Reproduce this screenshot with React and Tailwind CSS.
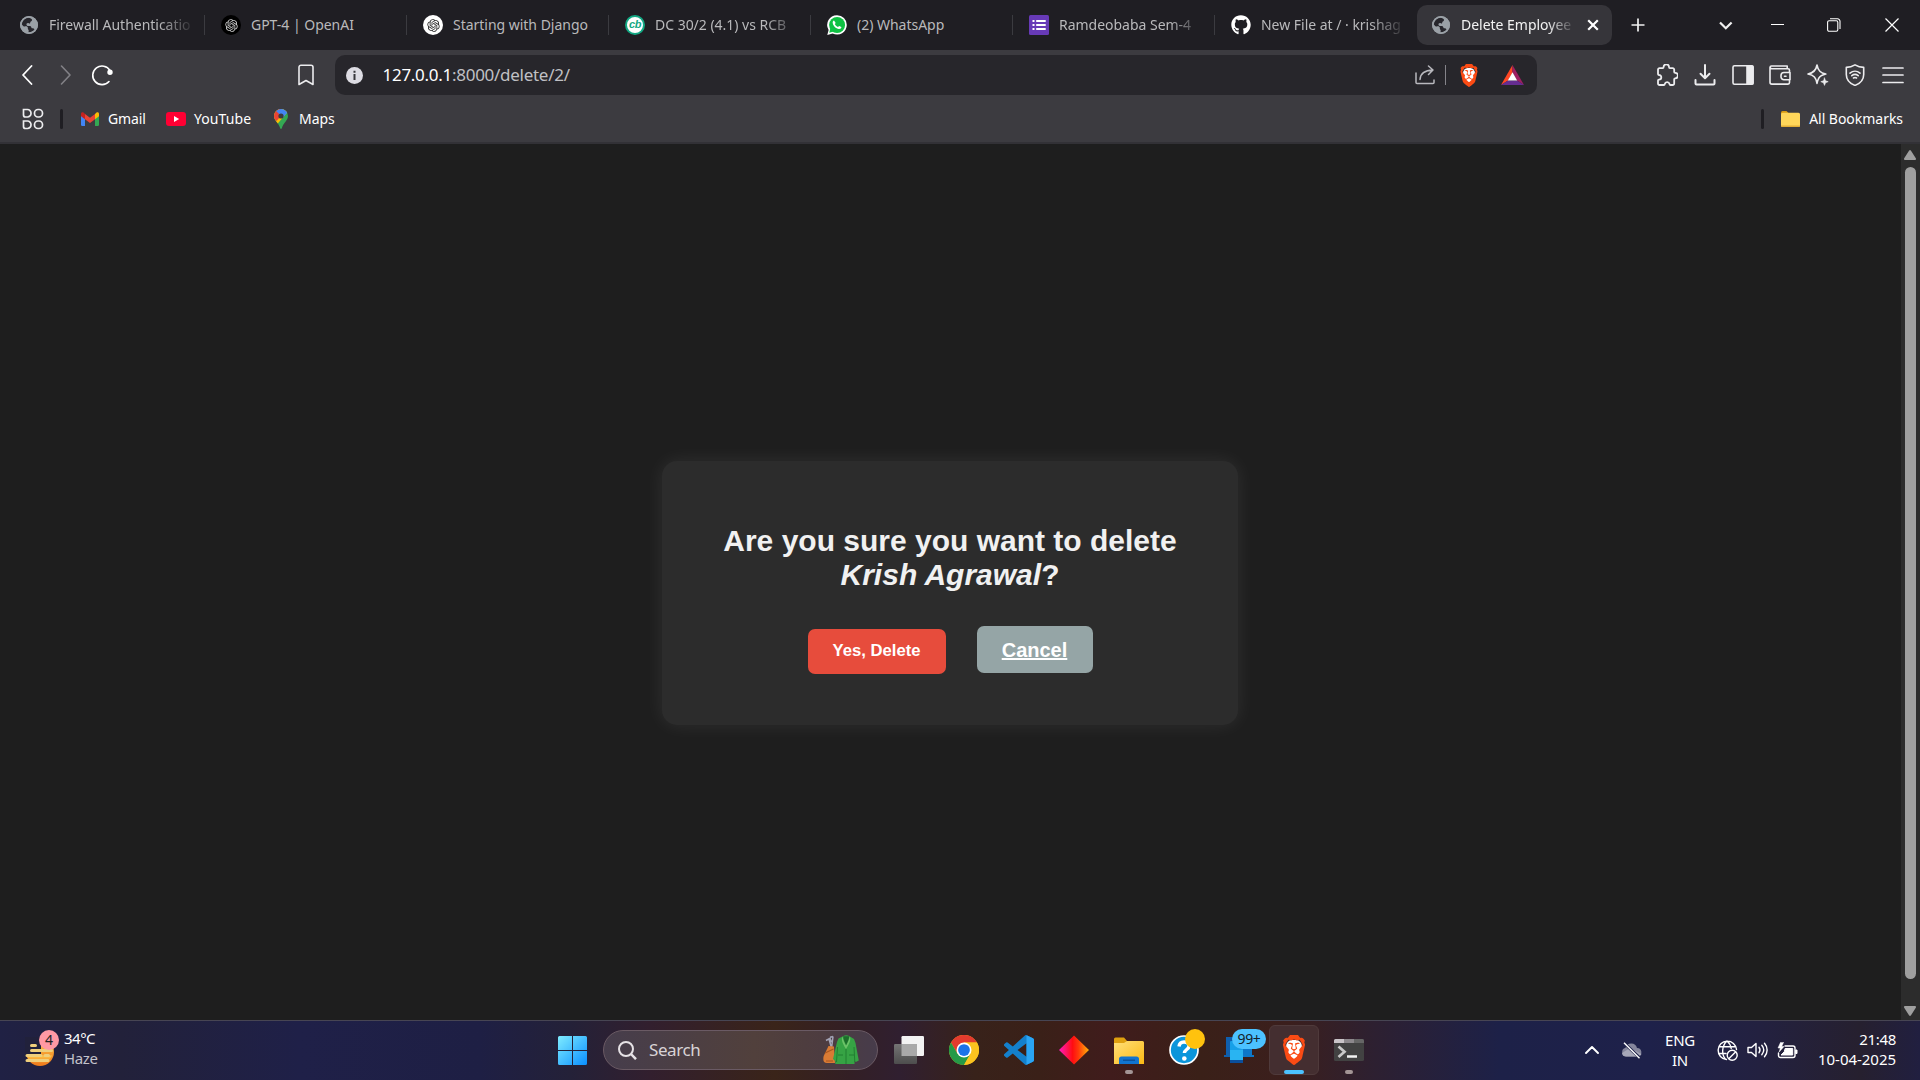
import React from "react";
import { SiBrave } from "react-icons/si";
import { RiOpenaiFill } from "react-icons/ri";
import { FaGithub } from "react-icons/fa";

const UI = "font-['Noto_Sans','Open_Sans',sans-serif]";

function GlobeFavicon() {
  return (
    <svg viewBox="0 0 18 18" className="size-[18px]">
      <circle cx="9" cy="9" r="9" fill="#9aa0a6" />
      <path d="M8.3 1.5C4.6 2 2 4.7 1.6 8.2l1.6 1.7c.8.8 1.8.5 2.4.4 1.200-.2 2 .4 2.200 1.300.2.800-.2 1.400.4 1.900.8.600.5 1.500.2 2.900 2.600.1 4.800-1.100 6.200-2.900-.5-.900-1.300-1.100-2.200-1.200-.9-.1-1-.9-1.400-1.600-.5-.8-1.500-.7-2.600-.7-.9 0-1.700-.4-1.900-1.300-.2-.9.500-1.600 1.400-1.700.9 0 1.200.9 2 .5.6-.4.1-1.300.9-1.900.8-.5 1.400-.9 1.200-1.800-.2-.8-1-1.300-1.700-1.600z" fill="#27262c" />
      <circle cx="9" cy="9" r="8.100" fill="none" stroke="#9aa0a6" strokeWidth="1.7" />
    </svg>
  );
}

function OpenAiFavicon({ dark }) {
  return (
    <span className={dark ? "flex size-5 items-center justify-center rounded-full bg-black text-[#d4d4d4]" : "flex size-5 items-center justify-center rounded-full bg-white text-[#222]"}>
      <RiOpenaiFill className="size-[15px]" />
    </span>
  );
}

function CbFavicon() {
  return (
    <span className="flex size-5 items-center justify-center rounded-full border-2 border-[#12a883] bg-white pb-px font-['Liberation_Sans',sans-serif] text-[11px] font-bold italic leading-none tracking-[-0.5px] text-[#12a883]">
      cb
    </span>
  );
}

function WhatsAppFavicon() {
  return (
    <svg viewBox="0 0 20 20" className="size-5">
      <path d="M10 .2A9.700 9.700 0 0 1 19.800 10 9.700 9.700 0 0 1 5.600 18.500L.3 19.900l1.300-5A9.700 9.700 0 0 1 10 .2z" fill="#fff" />
      <circle cx="10.100" cy="10" r="8" fill="#0fc143" />
      <path d="M2.300 17.800l1-4.500 3.400 3.300z" fill="#0fc143" />
      <path d="M7 5.400c-.7.200-1.500 1-1.300 2.400.4 3.100 3.200 5.900 6.200 6.300 1.600.1 2.500-.9 2.500-2l-2.300-1.200-1.100 1.200c-1.400-.5-2.600-1.700-3.200-3l.9-1.100z" fill="#fff" />
    </svg>
  );
}

function FormsFavicon() {
  return (
    <svg viewBox="0 0 20 20" className="size-5">
      <rect width="20" height="20" rx="1.500" fill="#673ab7" />
      <path d="M3.500 5h2v2h-2zM3.500 9h2v2h-2zM3.500 13h2v2h-2zM7.200 5h9.500v2H7.200zM7.200 9h9.500v2H7.200zM7.200 13h9.500v2H7.200z" fill="#fff" />
    </svg>
  );
}

const TABS = [
  { title: "Firewall Authenticatio", icon: <GlobeFavicon />, fade: true },
  { title: "GPT-4 | OpenAI", icon: <OpenAiFavicon dark /> },
  { title: "Starting with Django", icon: <OpenAiFavicon /> },
  { title: "DC 30/2 (4.1) vs RCB", icon: <CbFavicon />, fade: true },
  { title: "(2) WhatsApp", icon: <WhatsAppFavicon /> },
  { title: "Ramdeobaba Sem-4", icon: <FormsFavicon />, fade: true },
  { title: "New File at / · krishag", icon: <FaGithub className="size-5 text-white" />, fade: true },
];

const FADE = "[mask-image:linear-gradient(to_right,#000_110px,transparent_146px)]";

function Tab({ title, icon, last, fade }) {
  return (
    <div className="flex h-10 w-[202px] shrink-0 items-center">
      <span className="flex w-5 shrink-0 justify-center">{icon}</span>
      <span className={`ml-[10px] w-[146px] whitespace-nowrap text-[14px] leading-5 tracking-[-0.020px] text-[#b9b9bb] ${fade ? FADE : ""}`}>{title}</span>
      {!last && <span className="ml-[9px] h-5 w-px bg-[#3b3b40]" />}
    </div>
  );
}

function TabStrip() {
  return (
    <div className="flex h-[50px] items-center bg-[#1f1e23] pl-[19px]">
      {TABS.map((t, i) => (
        <Tab key={t.title} {...t} last={i === TABS.length - 1} />
      ))}
      <div className="-ml-4 flex h-10 w-[195px] shrink-0 items-center rounded-[10px] bg-[#36353a] pl-[15px]">
        <GlobeFavicon />
        <span className="ml-[11px] w-[111px] whitespace-nowrap text-[14px] leading-5 tracking-[-0.020px] text-[#f2f2f2] [mask-image:linear-gradient(to_right,#000_86px,transparent_115px)]">Delete Employee</span>
        <svg viewBox="0 0 12 12" className="ml-[15px] size-3" stroke="#fff" strokeWidth="2.200" fill="none"><path d="M1.200 1.200l9.600 9.600M10.800 1.200l-9.600 9.600" /></svg>
      </div>
      <svg viewBox="0 0 14 14" className="ml-[19px] size-[14px] shrink-0" stroke="#f0f0f0" strokeWidth="1.700" fill="none"><path d="M7 .5v13M.5 7h13" /></svg>
      <svg viewBox="0 0 14 14" className="ml-[74px] size-[14px] shrink-0" stroke="#f0f0f0" strokeWidth="2.200" fill="none"><path d="M1 4.500l5.800 5.800 5.800-5.800" /></svg>
      <svg viewBox="0 0 14 14" className="ml-[38px] size-[14px] shrink-0" stroke="#fff" strokeWidth="1" fill="none"><path d="M0 6.500h13" /></svg>
      <svg viewBox="0 0 14 14" className="ml-[42px] size-[14px] shrink-0" stroke="#fff" strokeWidth="1.100" fill="none"><rect x=".6" y="2.800" width="10.200" height="10.400" rx="1.500" /><path d="M3 .8h7.500a2.500 2.500 0 0 1 2.500 2.500V11" /></svg>
      <svg viewBox="0 0 14 14" className="ml-[44px] size-[14px] shrink-0" stroke="#fff" strokeWidth="1.200" fill="none"><path d="M.5.5l13 13M13.500.5l-13 13" /></svg>
    </div>
  );
}

function BraveLogo({ className }) {
  return (
    <span className={`relative flex items-center justify-center ${className}`}>
      <span className="absolute inset-[18%] rounded-[35%] bg-white" />
      <SiBrave className="relative size-full text-[#fb4b14]" preserveAspectRatio="none" />
    </span>
  );
}

function Toolbar() {
  const s = { fill: "none", stroke: "#ececee", strokeWidth: 1.600, strokeLinejoin: "round", strokeLinecap: "round" };
  return (
    <div className="flex h-[50px] items-center bg-[#3c3b40] pl-[20px] pr-[16px]">
      <svg viewBox="0 0 14 20" className="h-5 w-[14px]" {...s} stroke="#fff" strokeWidth="1.800"><path d="M11.500 1L3 10l8.500 9" /></svg>
      <svg viewBox="0 0 14 20" className="ml-[25px] h-5 w-[14px]" {...s} stroke="#828186" strokeWidth="1.600"><path d="M2.500 1L11 10l-8.500 9" /></svg>
      <svg viewBox="0 0 22 22" className="ml-[18px] size-[22px]" {...s} stroke="#fff" strokeWidth="1.600"><path d="M19 6.500A9.300 9.300 0 1 0 18 17.500" /><circle cx="19" cy="8.200" r="1.900" fill="#fff" /></svg>
      <svg viewBox="0 0 16 22" className="ml-[185px] h-[22px] w-4" {...s}><path d="M3 1.200h10a2 2 0 0 1 2 2V20.500l-7-4-7 4V3.200a2 2 0 0 1 2-2z" /></svg>
      <div className="ml-[21px] flex h-10 w-[1202px] items-center rounded-[10px] bg-[#27262b] pl-[11px]">
        <svg viewBox="0 0 17 17" className="size-[17px]"><circle cx="8.500" cy="8.500" r="8.500" fill="#dddce3" /><path d="M7.500 7h2v6h-2zM7.500 3.800h2v2h-2z" fill="#37363b" /></svg>
        <span className="ml-[19.500px] whitespace-nowrap text-[17px] leading-6 tracking-[-0.280px] text-[#c0c0c4]"><span className="text-white">127.0.0.1</span>:8000/delete/2/</span>
        <svg viewBox="0 0 20 20" className="ml-auto size-5" {...s} stroke="#b9b9be" strokeWidth="1.500"><path d="M1 8v9.500a1 1 0 0 0 1 1h16a1 1 0 0 0 1-1V15M5 14.500C5.300 8.500 9 5.300 18 5M13.500 1L18 5l-4.500 4.500" /></svg>
        <span className="ml-[10px] h-5 w-[1.500px] bg-[#85848a]" />
        <BraveLogo className="ml-[13px] h-[23px] w-5" />
        <svg viewBox="0 0 23 20" className="ml-[22px] mr-[13px] h-5 w-[23px]"><path d="M11.500 0L0 20l7-4.500 4.500-8z" fill="#ff4724" /><path d="M11.500 0L23 20l-7-4.500-4.500-8z" fill="#9e1f63" /><path d="M0 20h23l-7-4.500H7z" fill="#662d91" /><path d="M11.500 7.300L16.200 15.600H6.800z" fill="#fff" /></svg>
      </div>
      <div className="ml-auto flex items-center gap-[15.600px]">
        <svg viewBox="0 0 22 22" className="size-[22px]" {...s} strokeWidth="1.800"><path d="M3.500 4.200h3.200c.7 0 .9-.5.9-1.100a2.700 2.700 0 0 1 5.400 0c0 .6.2 1.100.9 1.100h2.800a1.500 1.500 0 0 1 1.500 1.500V8c0 .7.5.9 1 .9a2.700 2.700 0 0 1 0 5.400c-.5 0-1 .2-1 .9v4.300a1.500 1.500 0 0 1-1.500 1.500h-2.300c-.6 0-.8-.5-.9-1a2.400 2.400 0 0 0-4.700 0c-.1.500-.3 1-.9 1H3.500A1.500 1.500 0 0 1 2 19.500v-3c0-.6.5-.8 1-.9a2.300 2.300 0 0 0 0-4.600c-.5-.1-1-.3-1-.9V5.700a1.500 1.500 0 0 1 1.500-1.500z" /></svg>
        <svg viewBox="0 0 22 22" className="size-[22px]" {...s} strokeWidth="2"><path d="M11 1v13M6.500 9.800L11 14.300l4.500-4.500M1.500 16v3.500a1 1 0 0 0 1 1h17a1 1 0 0 0 1-1V16" /></svg>
        <svg viewBox="0 0 22 22" className="size-[22px]" {...s}><rect x="1" y="1.800" width="20" height="18.400" rx="1.500" /><path d="M15 2h5.200a.8.8 0 0 1 .8.800v16.400a.8.8 0 0 1-.8.800H15z" fill="#ececee" /></svg>
        <svg viewBox="0 0 22 22" className="size-[22px]" {...s}><path d="M20.500 8.500V6.200a1.500 1.500 0 0 0-1.500-1.500H2.800A1.800 1.800 0 0 1 1 3.300 1.500 1.500 0 0 1 2.600 2h15.600v2.500M1 3.300v15a1.800 1.800 0 0 0 1.800 1.800H19a1.500 1.500 0 0 0 1.500-1.500v-2.300M21 8.500h-6a3 3 0 0 0-3 3v1.300a3 3 0 0 0 3 3h6zM15.500 12.200h1.500" /></svg>
        <svg viewBox="0 0 22 22" className="size-[22px]" {...s}><path d="M10 1c.9 5.300 3 7.800 8.800 9-3.800.9-5.600 1.800-7 4.200-.7 1.300-1.300 3-1.800 5.200-.9-5.700-3-8.300-9-9.400C6.500 8.900 9.100 6.500 10 1z" /><path d="M17.500 14l1 2.700 2.700 1-2.700 1-1 2.700-1-2.700-2.700-1 2.700-1z" fill="#ececee" strokeWidth=".6" /></svg>
        <svg viewBox="0 0 22 22" className="size-[22px]" {...s}><path d="M11 .9c2.600 1.500 5.500 2.400 8.700 2.500v7c0 5.200-3.600 9-8.700 11-5.100-2-8.700-5.800-8.700-11v-7C5.500 3.300 8.400 2.400 11 .9z" /><path d="M6 9.200c3-2.700 7-2.700 10 0M7.800 11.700c2-1.600 4.400-1.600 6.400 0M9.500 14c1-.7 2-.7 3 0" /></svg>
        <svg viewBox="0 0 22 22" className="size-[22px]" {...s} strokeWidth="1.700"><path d="M1 4h20M1 11h20M1 18.500h20" /></svg>
      </div>
    </div>
  );
}

function BookmarksBar() {
  return (
    <div className="flex h-11 items-center border-b-2 border-[#323136] bg-[#3c3b40] pb-[5px] pl-[22px] pr-[17px] text-[14px] leading-5 text-white">
      <svg viewBox="0 0 22 22" className="size-[22px]" fill="none" stroke="#ececee" strokeWidth="1.700"><path d="M1.500 1.500h4a3.500 3.500 0 0 1 3.500 3.500v.5A3.500 3.500 0 0 1 5.500 9h-2a2 2 0 0 1-2-2zM1.500 13h4a3.500 3.500 0 0 1 3.500 3.500v.5a3.500 3.500 0 0 1-3.500 3.500h-2a2 2 0 0 1-2-2z" /><rect x="12.500" y="1.500" width="8" height="7.500" rx="3.500" /><rect x="12.500" y="13" width="8" height="7.500" rx="3.500" /></svg>
      <span className="ml-4 h-5 w-[3px] rounded-full bg-[#1f1e23]" />
      <svg viewBox="0 0 18 14" className="ml-[18px] h-[14px] w-[18px]"><path d="M0 2.500h4V14H1.200A1.200 1.200 0 0 1 0 12.800z" fill="#4285f4" /><path d="M14 2.500h4v10.300a1.200 1.200 0 0 1-1.200 1.200H14z" fill="#34a853" /><path d="M14 2L15.500.6C16.600-.3 18 .4 18 1.800v2.400l-4 3z" fill="#fbbc04" /><path d="M4 2l5 3.800L14 2v5.200L9 11 4 7.200z" fill="#ea4335" /><path d="M0 4.200V1.800C0 .4 1.400-.3 2.500.6L4 2v5.200z" fill="#c5221f" /></svg>
      <span className="ml-[9px] w-[58px] whitespace-nowrap tracking-[-0.100px]">Gmail</span>
      <svg viewBox="0 0 20 14" className="h-[14px] w-5"><rect width="20" height="14" rx="3" fill="#ff0033" /><path d="M8 4l5.200 3L8 10z" fill="#fff" /></svg>
      <span className="ml-2 w-[80px] whitespace-nowrap tracking-[0.080px]">YouTube</span>
      <svg viewBox="0 0 14 20" className="h-5 w-[14px]">
        <clipPath id="pin"><path d="M7 0a7 7 0 0 1 7 7c0 4.500-4.500 6.500-6.200 12.200-.3 1-1.300 1-1.600 0C4.500 13.500 0 11.500 0 7a7 7 0 0 1 7-7z" /></clipPath>
        <g clipPath="url(#pin)"><rect width="14" height="20" fill="#34a853" /><path d="M0 0h14v2.500L2.500 16 0 14z" fill="#fbbc04" /><path d="M0 0h7v7l-4.500 5L0 10z" fill="#ea4335" /><path d="M2 2L5 0h9v3L9 8.500z" fill="#4285f4" /></g>
        <circle cx="7" cy="7" r="2.600" fill="#3c3b40" />
      </svg>
      <span className="ml-[11px] whitespace-nowrap tracking-[-0.050px]">Maps</span>
      <span className="ml-auto h-5 w-[3px] rounded-full bg-[#1f1e23]" />
      <svg viewBox="0 0 19 16" className="ml-[17px] h-4 w-[19px]"><path d="M0 1.500A1.500 1.500 0 0 1 1.500 0h4L7.500 2v3H0z" fill="#d99b14" /><rect y="1.800" width="19" height="14.200" rx="1.500" fill="#ffd65a" /><path d="M0 14.500h19a1.500 1.500 0 0 1-1.500 1.500h-16A1.500 1.500 0 0 1 0 14.500z" fill="#e3ae36" /></svg>
      <span className="ml-[9px] whitespace-nowrap tracking-[-0.030px]">All Bookmarks</span>
    </div>
  );
}

function PageView() {
  return (
    <div className="flex h-[876px] bg-[#1e1e1e]">
      <main className="flex flex-1 items-start justify-center pt-[317px] font-['Liberation_Sans',Arial,sans-serif]">
        <section className="mr-px flex h-[264px] w-[576px] flex-col items-center rounded-[15px] bg-[#2c2c2c] pt-[63px] text-center shadow-[0_0_19px_rgba(255,255,255,0.080)]">
          <h2 className="text-[30px] font-bold leading-[34px] text-[#f1f1f1]">
            Are you sure you want to delete
            <br />
            <em>Krish Agrawal</em>?
          </h2>
          <div className="mt-[34px] flex items-start">
            <button className="mt-[3px] h-[45px] w-[138px] rounded-[7px] bg-[#e74c3c] pb-[2px] text-[16.670px] font-bold text-white">Yes, Delete</button>
            <a className="ml-[31px] h-[47px] w-[116px] rounded-[7px] bg-[#95a5a6] text-[20px] font-bold leading-[48px] text-white underline">Cancel</a>
          </div>
        </section>
      </main>
      <div className="flex w-[19px] flex-col items-center bg-[#2c2c2c] pr-px pt-1.5">
        <svg viewBox="0 0 12 10" className="h-[10px] w-3" fill="#9f9f9f"><path d="M5 .8a1.200 1.200 0 0 1 2 0l4.800 7.500A1.100 1.100 0 0 1 11 10H1A1.100 1.100 0 0 1 .2 8.300z" /></svg>
        <span className="mt-[7px] h-[812px] w-[11px] rounded-full bg-[#9f9f9f]" />
        <svg viewBox="0 0 12 10" className="mt-[27px] h-[10px] w-3" fill="#9f9f9f"><path d="M5 9.200a1.200 1.200 0 0 0 2 0l4.800-7.500A1.100 1.100 0 0 0 11 0H1A1.100 1.100 0 0 0 .2 1.700z" /></svg>
      </div>
    </div>
  );
}

function TaskItem({ children, active, open }) {
  return (
    <div className={active ? "relative flex size-[50px] items-center justify-center rounded-[6px] border border-[#4f3a3b] bg-[#442e30]" : "relative flex size-[50px] items-center justify-center"}>
      {children}
      {open && <span className="absolute bottom-px h-1 w-2 rounded-full bg-[#a39595]" />}
      {active && <span className="absolute bottom-0 h-1 w-5 rounded-full bg-[#4cc2ff]" />}
    </div>
  );
}

function SearchBox() {
  return (
    <div className="ml-4 flex h-10 w-[275px] items-center rounded-full border border-[#6a5a64] bg-[linear-gradient(90deg,#463d4c,#51403c_55%,#4d3c40_80%,#473c4b)] pl-[14px]">
      <svg viewBox="0 0 19 19" className="size-[19px]" fill="none" stroke="#e6e2e6" strokeWidth="2"><circle cx="8" cy="8" r="7" /><path d="M13 13l5 5.200" strokeWidth="2.500" /></svg>
      <span className="ml-[12px] text-[17px] leading-6 tracking-[-0.400px] text-[#d9d3d6]">Search</span>
      <svg viewBox="0 0 36 30" className="ml-auto mr-[18px] h-[30px] w-9">
        <path d="M3 5.500l4-2.200 1.500 4M6 4l2.500 9M10 1.500l-1.500 12M10 1.500l-3 .8" stroke="#a3a3b5" strokeWidth="1.500" fill="none" />
        <path d="M5.500 11l5.500.5 1 16.500H4c-3.500 0-4.300-3-3.300-7z" fill="#d97b34" />
        <path d="M2 18l8.500-4M3 26h7" stroke="#a8551f" strokeWidth="1.200" />
        <path d="M20 1.200C22 0 24.500 0 26.500 1.200L31 4l1.500 4 3.300 17.500-3 1.500-1.300-1v3H12.300v-3L10 24l4-17 1.500-3.500z" fill="#36a344" />
        <path d="M19.500 1.500c-1.800 3 .5 8 3.500 12.500 3-4.500 5.500-9.500 3.700-12.500-.5 3-2 6-3.700 9-1.700-3-3-6-3.500-9z" fill="#6cc268" />
        <path d="M20.200 1.300h6c-.3 3-1.600 6-3.100 8.700-1.500-2.700-2.600-5.700-2.900-8.700z" fill="#1c6d2b" />
        <path d="M23 14v15M15 20h5M26 20h5M14.500 12l-1 15M31 12l.8 15" stroke="#1f7b30" strokeWidth=".9" />
      </svg>
    </div>
  );
}

function Taskbar() {
  const tray = { fill: "none", stroke: "#fff", strokeWidth: 1.500, strokeLinecap: "round", strokeLinejoin: "round" };
  return (
    <footer className="flex h-[60px] items-center border-t border-[#474553] bg-[linear-gradient(90deg,#202144_0px,#22213a_120px,#1f2048_300px,#1e1f44_480px,#242138_570px,#321f2e_650px,#3a2419_775px,#331f25_850px,#301f30_900px,#38221a_975px,#3a2018_1040px,#401c1c_1110px,#3a2018_1200px,#3b1f1d_1290px,#2d2031_1375px,#1d2148_1500px,#1e214a_1650px,#232140_1760px,#26202f_1860px,#211f40_1920px)] pb-px">
      <div className="flex w-[558px] items-center pb-[3px]">
        <div className="relative ml-[25px] h-9 w-[34px]">
          <svg viewBox="0 0 34 36" className="h-9 w-[34px]">
            <linearGradient id="sun" x1="0" y1="0" x2="0" y2="1"><stop offset="0" stopColor="#ffc94a" /><stop offset="1" stopColor="#ee7a1c" /></linearGradient>
            <circle cx="15" cy="21" r="14" fill="url(#sun)" />
            <path d="M0 6h16v20H0z" fill="#21213b" />
            <path d="M2 24.500h25a14 14 0 0 1-24 3z" fill="url(#sun)" />
            <path d="M6.500 14.500h4M6.500 19.500h20M2 24.500h14M20 24.500h3.500M2 29.500h21" stroke="#efcf7c" strokeWidth="3" strokeLinecap="round" />
          </svg>
          <span className="absolute -top-px left-[14px] flex size-5 items-center justify-center rounded-full bg-[#ff99a4] text-[14px] leading-none text-[#222]">4</span>
        </div>
        <div className="ml-[5px] pb-px text-[15px] leading-5 tracking-[-0.500px]">
          <div className="text-white">34°C</div>
          <div className="text-[#c3c2cb] tracking-[-0.350px]">Haze</div>
        </div>
      </div>
      <svg viewBox="0 0 29 29" className="size-[29px]">
        <linearGradient id="win" x1="0" y1="0" x2="1" y2="1"><stop offset="0" stopColor="#7fecff" /><stop offset="1" stopColor="#0a8fff" /></linearGradient>
        <path d="M0 1.500A1.500 1.500 0 0 1 1.500 0H14v14H0zM15 0h12.500A1.500 1.500 0 0 1 29 1.500V14H15zM0 15h14v14H1.500A1.500 1.500 0 0 1 0 27.500zM15 15h14v12.500a1.500 1.500 0 0 1-1.500 1.500H15z" fill="url(#win)" />
      </svg>
      <SearchBox />
      <div className="ml-[6px] flex items-center gap-[5px]">
        <TaskItem>
          <svg viewBox="0 0 30 28" className="h-7 w-[30px]"><linearGradient id="tv" x1="0" x2="0" y1="0" y2="1"><stop offset="0" stopColor="#747474" /><stop offset="1" stopColor="#4d4d4d" /></linearGradient><rect x="7.500" width="22.500" height="20" rx="1.200" fill="#f3f3f3" /><rect y="8" width="23" height="20" rx="1.200" fill="url(#tv)" /><path d="M7.500 8H23v12H7.500z" fill="#a9a9a9" /></svg>
        </TaskItem>
        <TaskItem>
          <svg viewBox="0 0 48 48" className="size-[30px]"><circle cx="24" cy="24" r="24" fill="#fbc116" /><path d="M24 12h20.800A24 24 0 0 0 3.200 12l10.400 18z" fill="#e33b2e" /><path d="M34.400 30L24 48A24 24 0 0 1 3.200 12l10.400 18z" fill="#259a47" /><path d="M34.400 30L24 48a24 24 0 0 0 20.800-36H24z" fill="#fcc31f" /><circle cx="24" cy="24" r="12" fill="#fff" /><circle cx="24" cy="24" r="9.400" fill="#1b73e8" /></svg>
        </TaskItem>
        <TaskItem>
          <svg viewBox="0 0 24 24" className="size-[30px]"><path d="M23.150 2.587L18.210.21a1.494 1.494 0 0 0-1.705.29l-9.460 8.630-4.120-3.128a.999.999 0 0 0-1.276.057L.327 7.261A1 1 0 0 0 .326 8.740L3.899 12 .326 15.260a1 1 0 0 0 .001 1.479L1.650 17.940a.999.999 0 0 0 1.276.057l4.120-3.128 9.460 8.630a1.492 1.492 0 0 0 1.704.290l4.942-2.377A1.500 1.500 0 0 0 24 20.060V3.939a1.500 1.500 0 0 0-.850-1.352zm-5.146 14.861L10.826 12l7.178-5.448v10.896z" fill="#1480cc" /><path d="M18 0.150l5.150 2.437A1.500 1.500 0 0 1 24 3.940v16.120a1.500 1.500 0 0 1-.85 1.350L18 23.850z" fill="#2aa5f4" /></svg>
        </TaskItem>
        <TaskItem>
          <svg viewBox="0 0 30 30" className="size-[30px]"><linearGradient id="dia"><stop offset="0" stopColor="#ff1cc0" /><stop offset=".45" stopColor="#ff0d12" /><stop offset=".65" stopColor="#ff3a0a" /><stop offset="1" stopColor="#ffb30a" /></linearGradient><path d="M15 .5L30 15 15 29.500 0 15z" fill="url(#dia)" /></svg>
        </TaskItem>
        <TaskItem open>
          <svg viewBox="0 0 30 27" className="h-[27px] w-[30px]"><linearGradient id="fold" x1="0" y1="0" x2="1" y2="1"><stop offset="0" stopColor="#ffe07a" /><stop offset="1" stopColor="#fbb914" /></linearGradient><path d="M0 2a1.500 1.500 0 0 1 1.500-1.500H10l3 3.500H28v5H0z" fill="#dfa00f" /><path d="M0 6h10l3-2h15.500A1.500 1.500 0 0 1 30 5.500V27H0z" fill="url(#fold)" /><path d="M5 27v-5a2.500 2.500 0 0 1 2.500-2.500h15A2.500 2.500 0 0 1 25 22v5z" fill="#1174cf" /><path d="M9 23.200h12" stroke="#0b4a8f" strokeWidth="1.200" /></svg>
        </TaskItem>
        <TaskItem>
          <svg viewBox="0 0 30 30" className="size-[30px]"><circle cx="15" cy="15" r="14" fill="#0a95db" stroke="#fff" strokeWidth="1.700" /><path d="M10 11.500c.3-3 2.300-4.500 5-4.500s5 1.500 5 4c0 3.500-4.600 3.500-4.600 7" fill="none" stroke="#fff" strokeWidth="3.400" /><circle cx="15.300" cy="23.500" r="2.300" fill="#fff" /></svg>
          <span className="absolute left-[26px] top-1 size-5 rounded-full bg-[#ffc20e]" />
        </TaskItem>
        <TaskItem>
          <svg viewBox="0 0 30 26" className="h-[26px] w-[30px]"><path d="M2 0h16v20H0v-2h2z" fill="#0f5fae" /><path d="M18 6h10v12h2v2H18z" fill="#0d78c9" /><rect x="6" y="4" width="13" height="22" rx="1" fill="#17a0e8" /><path d="M6 13h13v10H6z" fill="#29b4f2" /><path d="M6 23h13v3H6z" fill="#0a4f9c" /></svg>
          <span className="absolute left-[18px] top-1 flex h-5 w-[34px] items-center justify-center rounded-full bg-[#4cc2ff] text-[14px] leading-none tracking-[-0.400px] text-[#14222c]">99+</span>
        </TaskItem>
        <TaskItem active>
          <BraveLogo className="h-[30px] w-[26px]" />
        </TaskItem>
        <TaskItem open>
          <svg viewBox="0 0 30 22" className="h-[22px] w-[30px]"><rect width="30" height="22" rx="1.500" fill="#424242" /><path d="M1.500 0H10v4H0V1.500A1.500 1.500 0 0 1 1.500 0z" fill="#c9c4c8" /><path d="M10 0h10v4H10z" fill="#8c888c" /><path d="M20 0h8.500A1.500 1.500 0 0 1 30 1.500V4H20z" fill="#666" /><path d="M4.500 7.500l6 5.300-6 5.200" fill="none" stroke="#c9c9c9" strokeWidth="2.700" /><path d="M13 17.500h10" stroke="#f2f2f2" strokeWidth="2.500" /></svg>
        </TaskItem>
      </div>
      <div className="ml-auto flex items-center pr-6 text-white">
        <svg viewBox="0 0 14 8" className="h-2 w-[14px]" {...tray} strokeWidth="1.900"><path d="M1 7l6-6 6 6" /></svg>
        <svg viewBox="0 0 21 17" className="ml-[22px] h-[17px] w-[21px]"><path d="M5 14.500a4.500 4.500 0 0 1-.5-8.800A6 6 0 0 1 16 6a4.300 4.300 0 0 1 1 8.500z" fill="#85869c" /><path d="M1 11a4 4 0 0 0 4 3.500h12a4 4 0 0 0 3.500-2.500L9 6z" fill="#a6a7b8" /><path d="M3 1l16 15" stroke="#1e214a" strokeWidth="3" /><path d="M3 .8l15.500 15.400" stroke="#fff" strokeWidth="1.400" /></svg>
        <div className="ml-[23px] w-[30px] pb-px text-center text-[15px] leading-5 tracking-[-0.300px]">
          <div>ENG</div>
          <div>IN</div>
        </div>
        <svg viewBox="0 0 21 21" className="ml-[22px] size-[21px]" {...tray} strokeWidth="1.400"><path d="M9.500 19.500A9.200 9.200 0 1 1 19.500 9.500M10 1C4.500 6 4.500 15 8.500 19.200M10 1c2.500 2 3.700 4.500 4.200 7.500M2 6.800h16.500M2 13.500h7" /><circle cx="15.200" cy="15.200" r="5" /><path d="M12 18.500l6.500-6.500" /></svg>
        <svg viewBox="0 0 21 18" className="ml-[9px] h-[18px] w-[21px]" {...tray} strokeWidth="1.400"><path d="M1 6.500h3.500L9 2.500v13l-4.500-4H1zM12 6.300c1.300 1.700 1.300 3.700 0 5.400M14.800 4.300c2.500 3 2.500 6.400 0 9.400M17.500 2.300c3.500 4 3.500 9.400 0 13.400" /></svg>
        <svg viewBox="0 0 21 17" className="ml-[9px] h-[17px] w-[21px]" {...tray} strokeWidth="1.400"><path d="M8 4h8a2 2 0 0 1 2 2v7.500a2 2 0 0 1-2 2H3.500a2 2 0 0 1-2-2V11" /><path d="M8.500 6.500h7.200v6.500H4l3-3z" fill="#fff" strokeWidth="1" /><path d="M19 8h1v3.500h-1z" fill="#fff" strokeWidth="1" /><path d="M3.500.5L1 6h2.300L2.200 10 7 4.500H4.700L6.500.5z" fill="#fff" strokeWidth=".5" /></svg>
        <div className="ml-5 w-[78px] whitespace-nowrap pb-[3px] text-right text-[15px] leading-5">
          <div className="tracking-[-0.300px]">21:48</div>
          <div className="tracking-[-0.030px]">10-04-2025</div>
        </div>
      </div>
    </footer>
  );
}

export default function App() {
  return (
    <div className={`flex h-[1080px] w-[1920px] flex-col overflow-hidden bg-[#1e1e1e] ${UI}`}>
      <TabStrip />
      <Toolbar />
      <BookmarksBar />
      <PageView />
      <Taskbar />
    </div>
  );
}
